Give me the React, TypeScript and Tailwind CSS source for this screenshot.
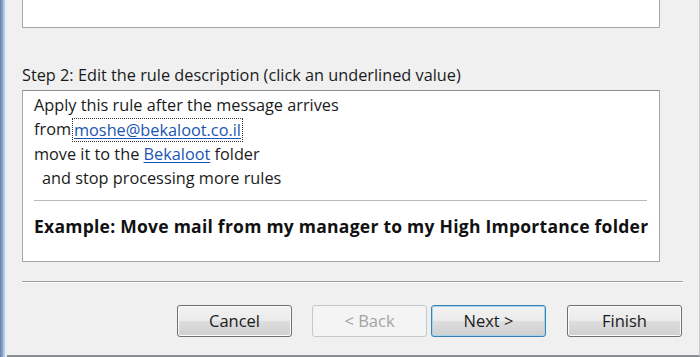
const font = { fontFamily: '"Open Sans", "Noto Sans", sans-serif' };

const Button = ({
  label,
  variant = "normal",
  className = "",
}: {
  label: string;
  variant?: "normal" | "default" | "disabled";
  className?: string;
}) => {
  if (variant === "disabled") {
    return (
      <div
        className={`flex h-[32px] w-[115px] items-center justify-center rounded-[3px] border border-[#c4c8cb] bg-[#f4f4f4] text-[16.5px] text-[#a3a3a3] ${className}`}
      >
        {label}
      </div>
    );
  }
  const border =
    variant === "default" ? "border-[#3c7fb1] shadow-[inset_0_0_0_1px_#9fd5f0]" : "border-[#707070] shadow-[inset_0_0_0_1px_#fbfbfb]";
  return (
    <div
      className={`flex h-[32px] w-[115px] items-center justify-center rounded-[3px] border bg-[linear-gradient(#f2f2f2_0%,#ebebeb_48%,#dddddd_52%,#cfcfcf_100%)] text-[16.5px] text-[#1b1b1b] ${border} ${className}`}
    >
      {label}
    </div>
  );
};

export default function App() {
  return (
    <div className="flex h-[357px] w-[700px] overflow-hidden bg-[#f0f0f0]" style={font}>
      {/* window frame, left */}
      <div className="flex h-full">
        <div className="w-[1px] bg-[#6f84a6]" />
        <div className="w-[2px] bg-[#7d9ccc]" />
        <div className="w-[2px] bg-[#b7c8e3]" />
        <div className="w-[2px] bg-[#e8eef6]" />
      </div>

      <div className="flex flex-1 flex-col border-b-[2px] border-r border-b-[#8a8f96] border-r-[#c8c8c8]">
        <div className="flex flex-1 flex-col pl-[15px] pr-[16px]">
          {/* step 1 box, cut off at top */}
          <div className="h-[28px] w-[638px] shrink-0 border-x border-b border-[#a6a6a6] bg-white" />

          <div className="mt-[36px] h-[23px] whitespace-nowrap text-[16.3px] leading-[23px] text-[#1b1b1b]">
            Step 2: Edit the rule description (click an underlined value)
          </div>

          {/* description box */}
          <div className="mt-[3px] flex h-[172px] w-[638px] shrink-0 flex-col border border-[#a6a6a6] border-t-[#8c8c8c] bg-white px-[11px] pt-[2px] text-[16.3px] leading-[24.4px] text-[#1b1b1b]">
            <div>Apply this rule after the message arrives</div>
            <div className="flex items-center">
              <span>from</span>
              <span className="ml-[1px] border border-dotted border-[#333] px-[1px] leading-[22px] text-[#1a55b5] underline underline-offset-2">
                moshe@bekaloot.co.il
              </span>
            </div>
            <div>
              move it to the{" "}
              <span className="text-[#1a55b5] underline underline-offset-2">Bekaloot</span> folder
            </div>
            <div className="pl-[8px]">and stop processing more rules</div>
            <div className="mt-[9px] h-px w-[613px] shrink-0 bg-[#b9b9b9]" />
            <div className="mt-[13px] whitespace-nowrap text-[17.5px] font-bold tracking-[0.25px] text-[#111]">
              Example: Move mail from my manager to my High Importance folder
            </div>
          </div>

          {/* separator */}
          <div className="mt-[19px] h-px w-[661px] shrink-0 bg-[#a0a0a0]" />
          <div className="h-px w-[661px] shrink-0 bg-white" />

          {/* buttons */}
          <div className="mt-[22px] flex pl-[155px]">
            <Button label="Cancel" />
            <Button label="< Back" variant="disabled" className="ml-[20px]" />
            <Button label="Next >" variant="default" className="ml-[4px]" />
            <Button label="Finish" className="ml-[21px]" />
          </div>
        </div>
      </div>
    </div>
  );
}
